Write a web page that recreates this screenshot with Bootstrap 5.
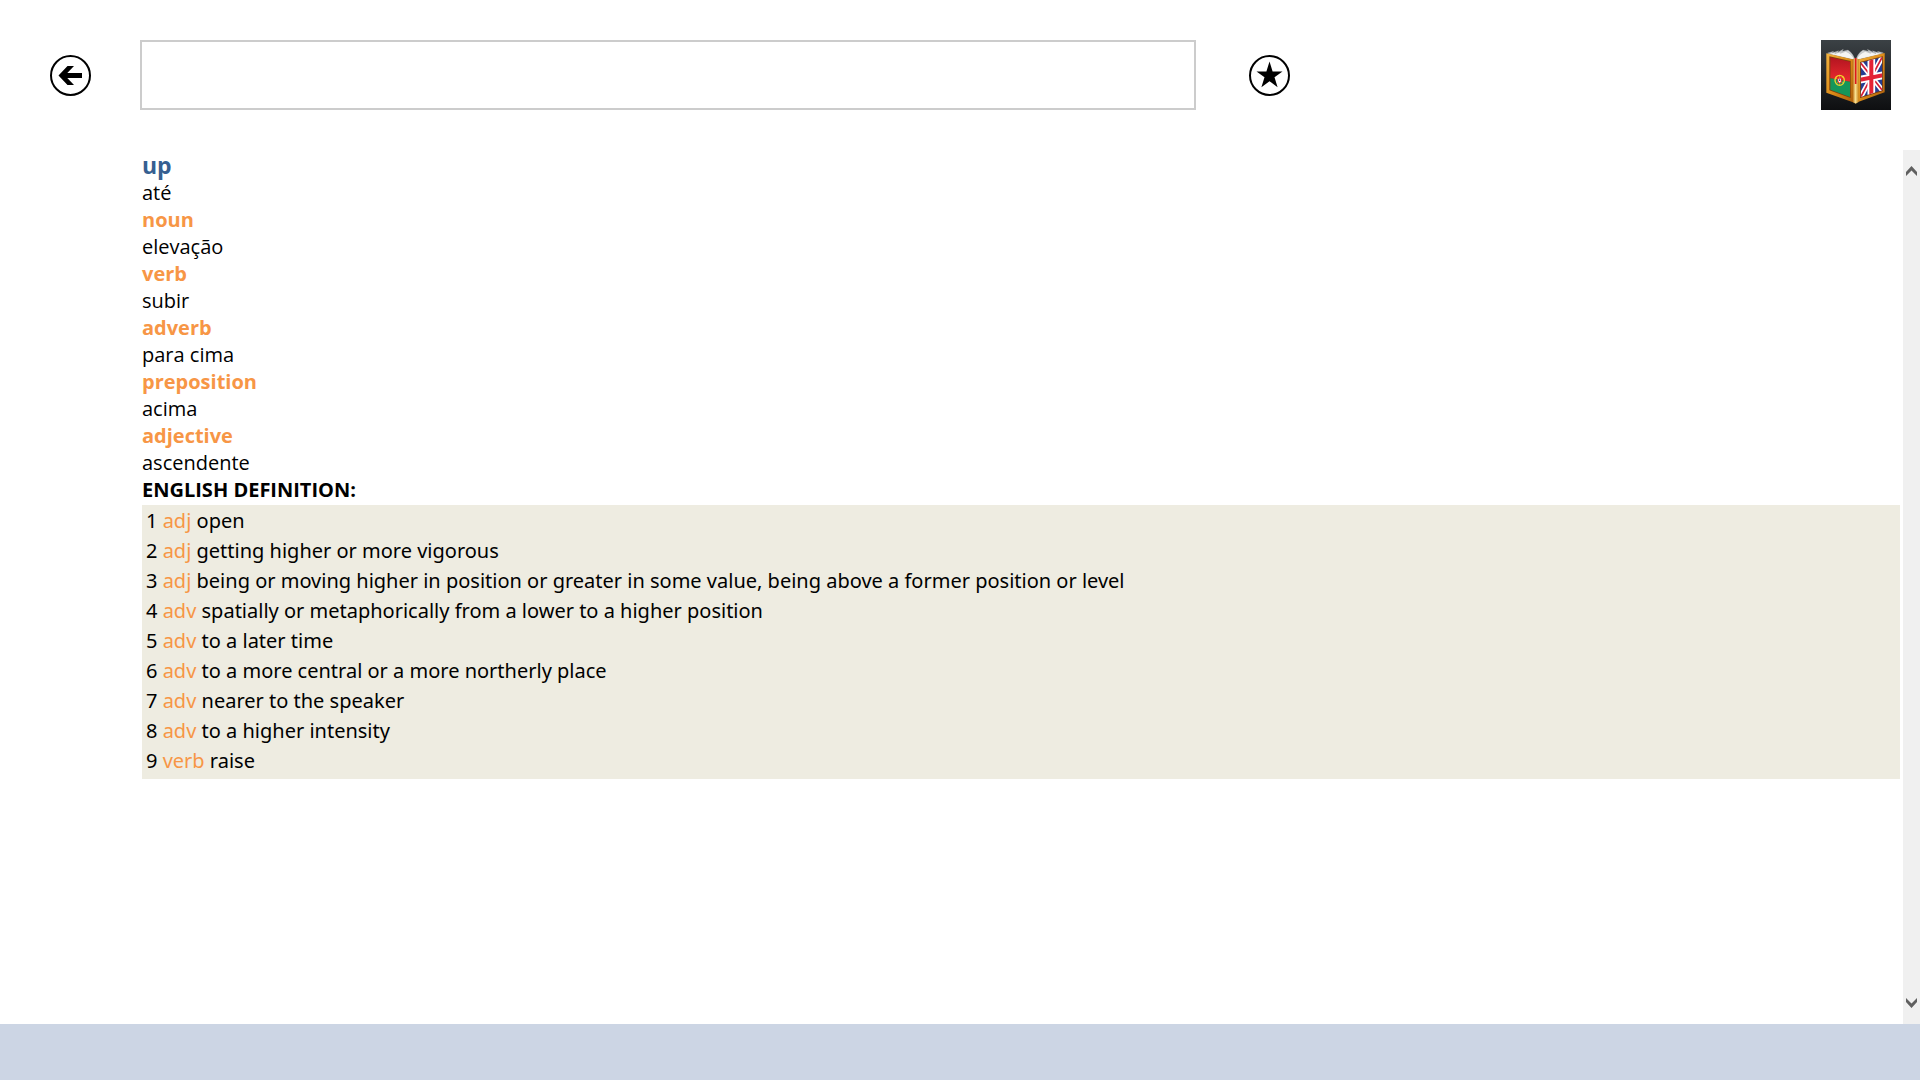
<!DOCTYPE html>
<html lang="en">
<head>
<meta charset="utf-8">
<meta name="viewport" content="width=device-width, initial-scale=1">
<title>Portuguese English Dictionary</title>
<link href="https://cdn.jsdelivr.net/npm/bootstrap@5.3.0/dist/css/bootstrap.min.css" rel="stylesheet">
<style>
  body { font-family: "Open Sans", "Noto Sans", sans-serif; font-size: 20px; line-height: 27px; color: #000; background: #fff; }
  .top-bar { padding: 40px 29px 40px 50px; }
  .round-btn { width: 41px; height: 41px; color: #000; }
  .round-btn svg { width: 41px; height: 41px; }
  .back-btn { margin-right: 49px; }
  .search-box { flex: 0 1 55vw; height: 70px; border: 2px solid #ccc; border-radius: 0; font-size: 28px; }
  .star-btn { margin-left: 53px; }
  .app-logo { width: 70px; height: 70px; }
  .entry { padding: 2px 3px 0 142px; }
  .headword { font-size: 23px; line-height: 27px; color: #365f91; }
  .part { font-size: 20px; line-height: 27px; color: #f79646; }
  .heading { font-size: 20px; line-height: 27px; }
  .senses { font-family: "Noto Sans", "Open Sans", sans-serif; background: #eeece1; padding: 1px 4px 3px; margin-top: 2px; }
  .senses li { line-height: 30px; }
  .tag { color: #f79646; }
  .scroll-rail { width: 17px; background: #f0f0f0; padding: 13px 0; }
  .scroll-rail svg { width: 17px; height: 17px; }
  .bottom-bar { height: 56px; background: #ccd5e4; }
</style>
<script defer src="https://cdn.jsdelivr.net/npm/bootstrap@5.3.0/dist/js/bootstrap.bundle.min.js"></script>
</head>
<body class="d-flex flex-column min-vh-100">
<header class="top-bar d-flex align-items-center">
  <button type="button" class="round-btn back-btn btn p-0 border-0 flex-shrink-0 d-flex" aria-label="Back">
    <svg viewBox="0 0 41 41"><circle cx="20.5" cy="20.5" r="19.5" fill="#fff" stroke="#000" stroke-width="2"/><path d="M8.500 20.500 17.500 11H24l-6.700 7H32v5H17.300L24 30h-6.500z" fill="#000"/></svg>
  </button>
  <input type="text" class="search-box form-control" aria-label="Search word">
  <button type="button" class="round-btn star-btn btn p-0 border-0 flex-shrink-0 d-flex" aria-label="Add to favourites">
    <svg viewBox="0 0 41 41"><circle cx="20.500" cy="20.500" r="19.500" fill="#fff" stroke="#000" stroke-width="2"/><path d="M20.500 6.500 23.600 16.400H33.500L25.500 22.200 28.600 32.200 20.500 26.200 12.400 32.200 15.500 22.200 7.500 16.400H17.400z" fill="#000"/></svg>
  </button>
  <svg class="app-logo ms-auto flex-shrink-0" viewBox="30 30 210 210" role="img" aria-label="Portuguese and English dictionary">
    <defs>
      <linearGradient id="night" x1="0" y1="0" x2="0" y2="1"><stop offset="0" stop-color="#3b4145"/><stop offset=".5" stop-color="#24272a"/><stop offset="1" stop-color="#0e0f11"/></linearGradient>
      <linearGradient id="gold" x1="0" y1="0" x2="1" y2="1"><stop offset="0" stop-color="#f2b340"/><stop offset=".5" stop-color="#dc8b18"/><stop offset="1" stop-color="#a95c0b"/></linearGradient>
      <linearGradient id="spine" x1="0" y1="0" x2="1" y2="0"><stop offset="0" stop-color="#b86a10"/><stop offset=".45" stop-color="#fbe292"/><stop offset="1" stop-color="#c9861d"/></linearGradient>
      <linearGradient id="red" x1="0" y1="0" x2="0" y2="1"><stop offset="0" stop-color="#b31520"/><stop offset="1" stop-color="#ea2a2f"/></linearGradient>
      <clipPath id="rightCover"><path d="M149 98 214 81V181L149 201z"/></clipPath>
    </defs>
    <path fill="url(#night)" d="M30 30h210v210H30z"/>
    <g stroke="#8b8f93" stroke-width="1">
      <path fill="#cfd2d4" d="M50 69 68 64 64 68 83 62 80 67 97 58 94 64 111 60Q126 70 132 88z"/>
      <path fill="#f5f5f3" d="M50 71 76 67 71 71 91 65 88 70 104 64Q124 72 131 90z"/>
      <path fill="#cfd2d4" d="M217 68 199 64 203 68 184 62 187 67 169 58 173 64 156 60Q140 70 135 88z"/>
      <path fill="#f5f5f3" d="M217 71 190 67 195 71 176 65 179 70 163 64Q142 72 136 90z"/>
    </g>
    <path fill="url(#gold)" d="M46 70 130 89V218L46 188z"/>
    <path fill="#7b3f0b" d="M55 79 119 93V204L55 181z"/>
    <path fill="url(#red)" d="M58 82 117 95V155L58 145z"/>
    <path fill="#16965a" d="M58 145 117 155V201L58 179z"/>
    <ellipse cx="86" cy="151" rx="14" ry="15" fill="none" stroke="#f2d42a" stroke-width="4"/>
    <path d="M73 143 99 160M76 162 96 140M86 136v30" stroke="#e7c82a" stroke-width="2"/>
    <path d="M79 143h14v10q-1 7-7 8-6-1-7-8z" fill="#e9252e"/><path d="M82 146h8v7q-1 4-4 5-3-1-4-5z" fill="#fff"/><path d="M84 148h4v5h-4z" fill="#3157a5"/>
    <path fill="url(#gold)" d="M139 89 221 69V187L139 217z"/>
    <path fill="#7b3f0b" d="M147 96 216 79V183L147 204z"/>
    <g clip-path="url(#rightCover)">
      <path fill="#263d91" d="M145 75h75v130h-75z"/>
      <path d="M145 94 218 186M147 205 217 75" stroke="#fff" stroke-width="15"/>
      <path d="M145 94 218 186M147 205 217 75" stroke="#d81d35" stroke-width="5"/>
      <path d="M147 149 216 136M181 78V205" stroke="#fff" stroke-width="23"/>
      <path d="M147 149 216 136M181 78V205" stroke="#e32135" stroke-width="12"/>
    </g>
    <path fill="url(#spine)" d="M125 88Q134 81 143 88V216L134 221 125 216z"/>
    <path d="M134 84V162" stroke="#dc171e" stroke-width="5"/>
  </svg>
</header>
<div class="d-flex flex-grow-1">
  <main class="entry flex-grow-1">
    <h1 class="headword fw-bold m-0">up</h1>
    <p class="m-0">até</p>
    <h2 class="part fw-bold m-0">noun</h2>
    <p class="m-0">elevação</p>
    <h2 class="part fw-bold m-0">verb</h2>
    <p class="m-0">subir</p>
    <h2 class="part fw-bold m-0">adverb</h2>
    <p class="m-0">para cima</p>
    <h2 class="part fw-bold m-0">preposition</h2>
    <p class="m-0">acima</p>
    <h2 class="part fw-bold m-0">adjective</h2>
    <p class="m-0">ascendente</p>
    <h2 class="heading fw-bold m-0">ENGLISH DEFINITION:</h2>
    <ol class="senses list-unstyled mb-0">
      <li>1 <span class="tag">adj</span> open</li>
      <li>2 <span class="tag">adj</span> getting higher or more vigorous</li>
      <li>3 <span class="tag">adj</span> being or moving higher in position or greater in some value, being above a former position or level</li>
      <li>4 <span class="tag">adv</span> spatially or metaphorically from a lower to a higher position</li>
      <li>5 <span class="tag">adv</span> to a later time</li>
      <li>6 <span class="tag">adv</span> to a more central or a more northerly place</li>
      <li>7 <span class="tag">adv</span> nearer to the speaker</li>
      <li>8 <span class="tag">adv</span> to a higher intensity</li>
      <li>9 <span class="tag">verb</span> raise</li>
    </ol>
  </main>
  <div class="scroll-rail d-flex flex-column justify-content-between flex-shrink-0">
    <button type="button" class="btn p-0 border-0 d-flex" aria-label="Scroll up"><svg viewBox="0 0 17 17"><path d="M3 9 8.500 3 14 9V13L8.500 7.500 3 13z" fill="#606060"/></svg></button>
    <button type="button" class="btn p-0 border-0 d-flex" aria-label="Scroll down"><svg viewBox="0 0 17 17"><path d="M3 8 8.500 14 14 8V4L8.500 9.500 3 4z" fill="#606060"/></svg></button>
  </div>
</div>
<footer class="bottom-bar"></footer>
</body>
</html>
